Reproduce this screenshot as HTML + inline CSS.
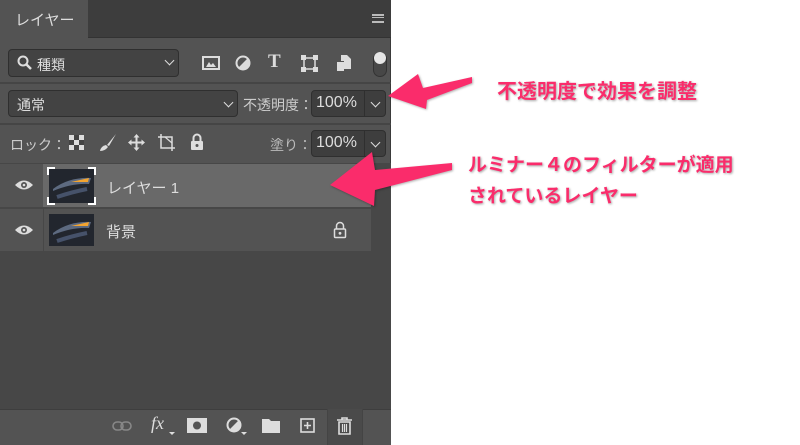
<!DOCTYPE html>
<html><head><meta charset="utf-8"><style>
*{margin:0;padding:0;box-sizing:border-box}
body{width:800px;height:445px;background:#fff;position:relative;overflow:hidden;font-family:"Liberation Sans","Noto Sans CJK JP",sans-serif;}
.p{position:absolute;left:0;top:0;width:391px;height:445px;background:#535353;border-right:1px solid #3a3a3a}
.a{position:absolute}
.t{color:#ddd;font-size:14px;white-space:nowrap}
.box{position:absolute;background:#434343;border:1px solid #2f2f2f;border-radius:4px}
.chev{position:absolute;width:7px;height:7px;border-right:1.6px solid #ddd;border-bottom:1.6px solid #ddd;transform:rotate(45deg)}
.hl{position:absolute;left:0;width:391px;height:2px;background:#454545}
.pink{color:#fa2c6b;font-weight:bold;font-size:19px;text-shadow:1px 1px 2px rgba(0,0,0,.35);white-space:nowrap;position:absolute}
</style></head><body>
<div class="p">
 <div class="a" style="left:88px;top:0;width:303px;height:38px;background:#3d3d3d;border-bottom:1px solid #333"></div>
 <div class="a t" style="left:15px;top:9px;font-size:15px">レイヤー</div>
 <div class="a" style="left:372px;top:14px;width:12px;height:9px;border-top:2px solid #bbb;border-bottom:2px solid #bbb"></div>
 <div class="a" style="left:372px;top:17px;width:12px;height:3px;border-top:1.5px solid #bbb"></div>

 <div class="box" style="left:8px;top:49px;width:171px;height:28px"></div>
 <svg class="a" style="left:17px;top:55px" width="16" height="16"><circle cx="6" cy="6" r="4.5" stroke="#ddd" stroke-width="2" fill="none"/><line x1="9.5" y1="9.5" x2="14" y2="14" stroke="#ddd" stroke-width="2.5"/></svg>
 <div class="a t" style="left:37px;top:55px">種類</div>
 <div class="chev" style="left:166px;top:57px"></div>
 <svg class="a" style="left:202px;top:55px" width="18" height="16"><rect x="1" y="2" width="16" height="12" fill="none" stroke="#ddd" stroke-width="2"/><path d="M4 12 L7 7 L9 10 L11 8 L14 12Z" fill="#ddd"/></svg>
 <svg class="a" style="left:235px;top:55px" width="16" height="16"><circle cx="8" cy="8" r="6.5" fill="none" stroke="#ddd" stroke-width="2"/><path d="M12.6 3.4 A6.5 6.5 0 0 1 3.4 12.6Z" fill="#ddd"/></svg>
 <div class="a" style="left:268px;top:51px;color:#ddd;font:bold 19px 'Liberation Serif',serif">T</div>
 <svg class="a" style="left:301px;top:55px" width="17" height="17"><rect x="3" y="3" width="11" height="11" fill="none" stroke="#ddd" stroke-width="1.5"/><g fill="#ddd"><rect x="0" y="0" width="5" height="5"/><rect x="12" y="0" width="5" height="5"/><rect x="0" y="12" width="5" height="5"/><rect x="12" y="12" width="5" height="5"/></g></svg>
 <svg class="a" style="left:336px;top:54px" width="16" height="18"><path d="M5 1 H11 L15 5 V15 H8 V7 H5Z" fill="#ddd"/><rect x="1" y="8" width="7" height="9" fill="#ddd"/></svg>
 <div class="a" style="left:373px;top:52px;width:14px;height:25px;border:1.5px solid #333;border-radius:7px;background:#474747"></div>
 <div class="a" style="left:374px;top:52px;width:12px;height:12px;border-radius:6px;background:#e6e6e6"></div>

 <div class="hl" style="top:82px"></div>
 <div class="box" style="left:8px;top:90px;width:230px;height:27px"></div>
 <div class="a t" style="left:17px;top:95px">通常</div>
 <div class="chev" style="left:225px;top:99px"></div>
 <div class="a t" style="left:243px;top:95px;color:#ccc">不透明度：</div>
 <div class="box" style="left:311px;top:90px;width:75px;height:27px;background:#3e3e3e"></div>
 <div class="a" style="left:364px;top:91px;width:1px;height:25px;background:#2f2f2f"></div>
 <div class="a t" style="left:316px;top:94px;font-size:16px">100%</div>
 <div class="chev" style="left:372px;top:99px"></div>

 <div class="hl" style="top:123px"></div>
 <div class="a t" style="left:10px;top:135px;color:#ccc">ロック：</div>
 <svg class="a" style="left:69px;top:135px" width="15" height="15"><rect x="0" y="0" width="15" height="15" fill="#ddd"/><g fill="#444"><rect x="5" y="0" width="5" height="5"/><rect x="0" y="5" width="5" height="5"/><rect x="10" y="5" width="5" height="5"/><rect x="5" y="10" width="5" height="5"/></g></svg>
 <svg class="a" style="left:99px;top:133px" width="18" height="19"><path d="M17 1 L8 12 L10 13 Z" fill="#ddd"/><path d="M7 12 Q2 13 1 18 Q6 18 9 14Z" fill="#ddd"/></svg>
 <svg class="a" style="left:127px;top:133px" width="19" height="19"><path d="M9.5 1 L12.5 4.5 H10.5 V8.5 H14.5 V6.5 L18 9.5 L14.5 12.5 V10.5 H10.5 V14.5 H12.5 L9.5 18 L6.5 14.5 H8.5 V10.5 H4.5 V12.5 L1 9.5 L4.5 6.5 V8.5 H8.5 V4.5 H6.5Z" fill="#ddd"/></svg>
 <svg class="a" style="left:157px;top:133px" width="19" height="19"><path d="M4 1 V15 H18 M1 4 H15 V18" fill="none" stroke="#ddd" stroke-width="1.5"/><path d="M8 4 L15 10" stroke="#ddd" stroke-width="1.2"/></svg>
 <svg class="a" style="left:190px;top:133px" width="14" height="18"><path d="M3.5 8 V5 A3.5 3.5 0 0 1 10.5 5 V8" fill="none" stroke="#ddd" stroke-width="2"/><rect x="1" y="8" width="12" height="9" rx="1" fill="#ddd"/><circle cx="7" cy="12.5" r="1.5" fill="#535353"/></svg>
 <div class="a t" style="left:270px;top:135px;color:#bbb">塗り：</div>
 <div class="box" style="left:311px;top:130px;width:75px;height:27px;background:#3e3e3e"></div>
 <div class="a" style="left:364px;top:131px;width:1px;height:25px;background:#2f2f2f"></div>
 <div class="a t" style="left:316px;top:134px;font-size:16px">100%</div>
 <div class="chev" style="left:372px;top:139px"></div>

 <div class="a" style="left:0;top:163px;width:391px;height:246px;background:#474747"></div>
 <div class="a" style="left:0;top:164px;width:371px;height:43px;background:#696969"></div>
 <div class="a" style="left:0;top:164px;width:43px;height:43px;background:#535353"></div>
 <div class="a" style="left:0;top:209px;width:371px;height:42px;background:#535353"></div>
 <div class="a" style="left:43px;top:209px;width:1px;height:42px;background:#474747"></div>
 <svg class="a" style="left:14px;top:179px" width="20" height="12"><path d="M1 6 Q10 -3 19 6 Q10 15 1 6Z" fill="#ddd"/><circle cx="10" cy="6" r="3" fill="#535353"/><circle cx="10" cy="6" r="1.3" fill="#ddd"/></svg>
 <svg class="a" style="left:14px;top:224px" width="20" height="12"><path d="M1 6 Q10 -3 19 6 Q10 15 1 6Z" fill="#ddd"/><circle cx="10" cy="6" r="3" fill="#535353"/><circle cx="10" cy="6" r="1.3" fill="#ddd"/></svg>
 <svg class="a" style="left:47px;top:167px" width="49" height="38"><rect x="2" y="2" width="45" height="34" fill="#22262e"/><path d="M6 22 Q22 10 44 11 L42 17 Q25 16 6 24Z" fill="#5d6a80"/><path d="M24 15 L42 11 L41 15 Z" fill="#f3a430"/><path d="M10 30 Q25 25 40 22" stroke="#46526a" stroke-width="4" fill="none"/><path d="M1 8 V1 H8 M41 1 H48 V8 M48 30 V37 H41 M8 37 H1 V30" stroke="#fff" stroke-width="2" fill="none"/></svg>
 <svg class="a" style="left:47px;top:213px" width="49" height="34"><rect x="2" y="1" width="45" height="32" fill="#22262e"/><path d="M6 20 Q22 8 44 9 L42 15 Q25 14 6 22Z" fill="#5d6a80"/><path d="M24 13 L42 9 L41 13 Z" fill="#f3a430"/><path d="M10 28 Q25 23 40 20" stroke="#46526a" stroke-width="4" fill="none"/></svg>
 <div class="a t" style="left:107px;top:177px;font-size:15px">レイヤー 1</div>
 <div class="a t" style="left:106px;top:221px;font-size:15px">背景</div>
 <svg class="a" style="left:333px;top:221px" width="14" height="18"><path d="M3.5 8 V5 A3.5 3.5 0 0 1 10.5 5 V8" fill="none" stroke="#ddd" stroke-width="1.5"/><rect x="1.5" y="8" width="11" height="8.5" rx="1" fill="none" stroke="#ddd" stroke-width="1.5"/><circle cx="7" cy="12.3" r="1.4" fill="#ddd"/></svg>

 <div class="a" style="left:0;top:409px;width:391px;height:36px;background:#535353;border-top:1px solid #3e3e3e"></div>
 <div class="a" style="left:327px;top:409px;width:36px;height:36px;background:#4a4a4a;border-left:1px solid #444;border-right:1px solid #444"></div>
 <svg class="a" style="left:112px;top:420px" width="20" height="12"><rect x="1" y="2" width="10" height="8" rx="4" fill="none" stroke="#888" stroke-width="1.6"/><rect x="9" y="2" width="10" height="8" rx="4" fill="none" stroke="#888" stroke-width="1.6"/></svg>
 <div class="a" style="left:151px;top:413px;color:#ddd;font:italic 18px 'Liberation Serif',serif">fx</div>
 <div class="a" style="left:169px;top:432px;border:3px solid transparent;border-top:3px solid #ddd"></div>
 <svg class="a" style="left:187px;top:418px" width="20" height="15"><rect width="20" height="15" fill="#ddd"/><circle cx="10" cy="7.5" r="4" fill="#535353"/></svg>
 <svg class="a" style="left:226px;top:417px" width="20" height="20"><circle cx="8" cy="8" r="6.5" fill="none" stroke="#ddd" stroke-width="2"/><path d="M12.6 3.4 A6.5 6.5 0 0 1 3.4 12.6Z" fill="#ddd"/></svg>
 <div class="a" style="left:241px;top:432px;border:3px solid transparent;border-top:3px solid #ddd"></div>
 <svg class="a" style="left:262px;top:418px" width="18" height="15"><path d="M0 1 H7 L9 3 H18 V15 H0Z" fill="#ddd"/></svg>
 <svg class="a" style="left:300px;top:418px" width="15" height="15"><rect x="1" y="1" width="13" height="13" fill="none" stroke="#ddd" stroke-width="1.6"/><path d="M7.5 4 V11 M4 7.5 H11" stroke="#ddd" stroke-width="1.6"/></svg>
 <svg class="a" style="left:337px;top:417px" width="15" height="18"><path d="M0 3 H15 M5 3 V1 H10 V3" stroke="#ddd" stroke-width="1.6" fill="none"/><path d="M2 5 H13 V17 H2Z" fill="none" stroke="#ddd" stroke-width="1.6"/><path d="M5.5 7 V15 M7.5 7 V15 M9.5 7 V15" stroke="#ddd" stroke-width="1.2"/></svg>
</div>

<svg class="a" style="left:0;top:0" width="800" height="445">
 <g fill="#fa2c6b" style="filter:drop-shadow(1px 1px 1px rgba(0,0,0,.3))">
 <path d="M388 96 L418 74 L423 88 L472 77 L472 83 L427 100 L426 109 Z"/>
 <path d="M330 185 L372 152 L375 170 L452 163 L452 170 L375 190 L374 206 Z"/>
 </g>
</svg>
<div class="pink" style="left:497px;top:75px;font-size:20px">不透明度で効果を調整</div>
<div class="pink" style="left:468px;top:150px">ルミナー４のフィルターが適用</div>
<div class="pink" style="left:468px;top:181px">されているレイヤー</div>
</body></html>
